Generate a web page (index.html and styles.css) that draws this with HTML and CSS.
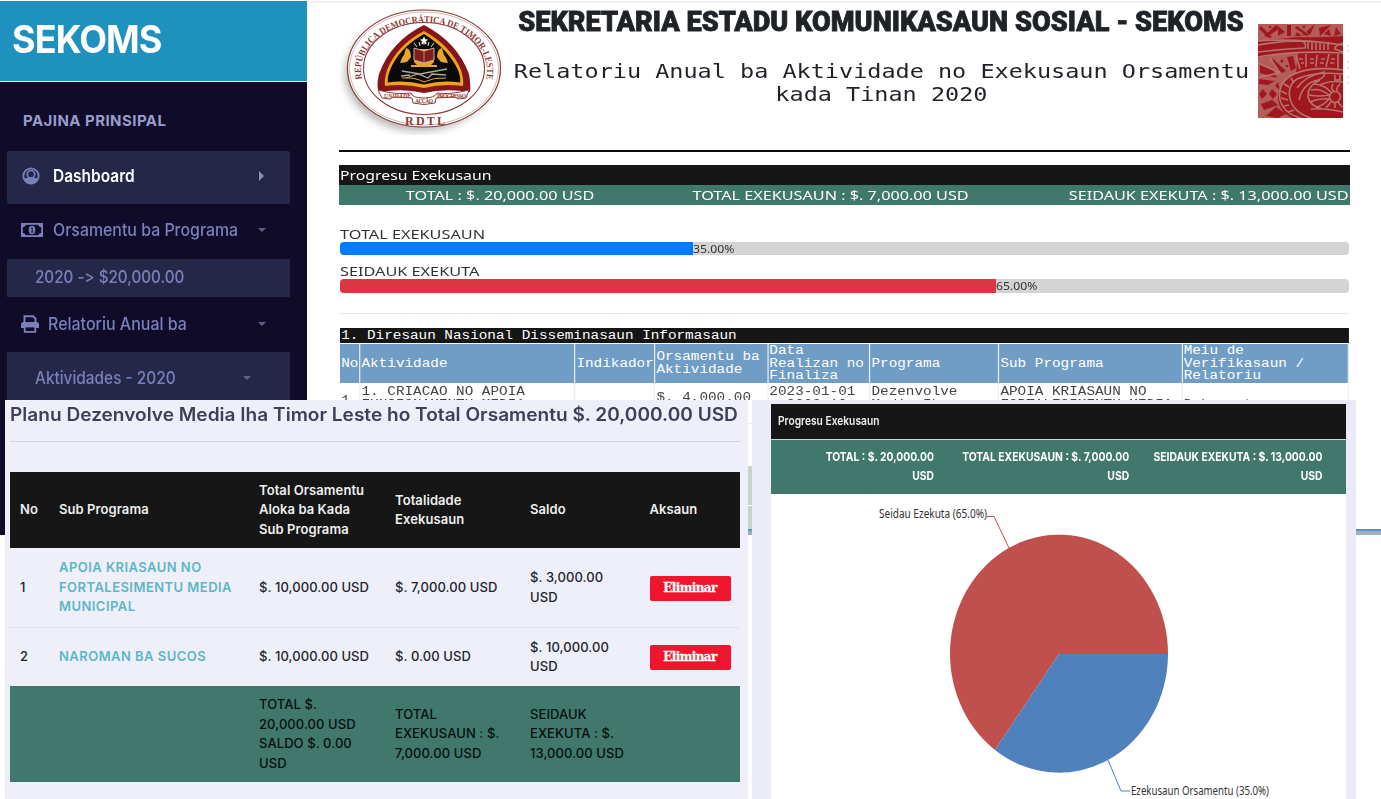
FILE: index.html
```html
<!DOCTYPE html>
<html lang="tet">
<head>
<meta charset="utf-8">
<title>SEKOMS</title>
<link rel="stylesheet" href="styles.css">
</head>
<body>
<div class="page">
  <aside class="sidebar">
    <div class="brand"><span>SEKOMS</span></div>
    <div class="section">PAJINA PRINSIPAL</div>
    <a class="item active">
      <svg class="ico" width="18" height="18" viewBox="0 0 18 18"><circle cx="9" cy="9" r="7.7" fill="none" stroke="#7b80bb" stroke-width="1.8"/><circle cx="9" cy="7.2" r="3.7" fill="none" stroke="#7b80bb" stroke-width="1.6"/><path d="M2 11.500Q5 11 6.500 10.600Q9 12.500 11.500 10.600Q13 11 16 11.500Q13.500 17 9 17T2 11.500Z" fill="#7b80bb"/></svg>
      <span class="t-dash">Dashboard</span>
      <svg class="caret" width="6" height="10" viewBox="0 0 6 10"><path d="M0 0L5 5L0 10Z" fill="#8c8fb4"/></svg>
    </a>
    <a class="item money">
      <svg class="ico" width="22" height="14" viewBox="0 0 22 14"><rect x="0.9" y="0.9" width="20.2" height="12.2" fill="none" stroke="#7b80bb" stroke-width="1.8"/><path d="M1 1H5Q4.5 4 1 4.500ZM21 1H17Q17.500 4 21 4.500ZM1 13H5Q4.500 10 1 9.500ZM21 13H17Q17.500 10 21 9.500Z" fill="#7b80bb"/><ellipse cx="11" cy="7" rx="3.300" ry="4.200" fill="#7b80bb"/><path d="M10 5.500L11.200 4.700V8.700M9.800 9H12.500" stroke="#0f0b29" fill="none"/></svg>
      <span class="t-orsa">Orsamentu ba Programa</span>
      <svg class="caret" width="8" height="4" viewBox="0 0 8 4"><path d="M0 0H8L4 4Z" fill="#5d6088"/></svg>
    </a>
    <a class="sub"><span class="t-2020">2020 -&gt; $20,000.00</span></a>
    <a class="item print">
      <svg class="ico" width="18" height="18" viewBox="0 0 18 18"><path d="M3.500 8V1.200H12L14.500 3.500V8" fill="none" stroke="#7b80bb" stroke-width="2"/><path d="M2.500 7H15.500Q18 7 18 9.500V13H15V11H3V13H0V9.500Q0 7 2.500 7Z" fill="#7b80bb"/><rect x="3.700" y="11.500" width="10.600" height="5.400" fill="none" stroke="#7b80bb" stroke-width="1.800"/></svg>
      <span class="t-rela">Relatoriu Anual ba</span>
      <svg class="caret" width="8" height="4" viewBox="0 0 8 4"><path d="M0 0H8L4 4Z" fill="#5d6088"/></svg>
    </a>
    <a class="sub last"><span class="t-akti">Aktividades - 2020</span>
      <svg class="caret" width="8" height="4" viewBox="0 0 8 4"><path d="M0 0H8L4 4Z" fill="#5d6088"/></svg></a>
  </aside>

  <main class="report">
    <header class="head">
      <svg class="seal" width="164" height="130" viewBox="0 0 164 130">
        <defs>
          <filter id="sh" x="-20%" y="-20%" width="140%" height="140%"><feGaussianBlur stdDeviation="4"/></filter>
          <path id="arcTop" d="M23 74A63 48 0 1 1 147 74"/>
        </defs>
        <ellipse cx="80" cy="69" rx="74" ry="57" fill="#8b8b8b" opacity=".65" filter="url(#sh)"/>
        <ellipse cx="85" cy="63.500" rx="76.500" ry="58.500" fill="#fff" stroke="#8d3a36" stroke-width="1.200"/>
        <ellipse cx="85" cy="63.500" rx="74.500" ry="56.500" fill="none" stroke="#b98280" stroke-width=".600"/>
        <ellipse cx="85" cy="63.500" rx="60.500" ry="46" fill="none" stroke="#8d3a36" stroke-width="1.100"/>
        <text class="seal-text"><textPath href="#arcTop" textLength="192" lengthAdjust="spacingAndGlyphs">REPÚBLICA DEMOCRÁTICA DE TIMOR-LESTE</textPath></text>
        <text class="seal-rdtl" x="66" y="119.500" textLength="40">RDTL</text>
        <path d="M85 20Q118 37 130 69Q132 81 131 87Q106 83 85 88Q64 83 40 87Q37 81 40 69Q52 36 85 20Z" fill="#86151b"/>
        <path d="M85 26Q112 41 122 65Q125 75 124 81Q104 78 85 83Q65 78 46 81Q45 75 48 65Q58 40 85 26Z" fill="#f1a21d"/>
        <path d="M85 29Q109 44 119 65Q122 73 121 77.500Q103 75 85 79.500Q66 75 49 77.500Q48 73 51 65Q60 43 85 29Z" fill="#0c0a08"/>
        <g transform="translate(1 0)">
        <path d="M84 31.500L85.300 34.300L88 34.500L86 36.500L86.700 39.500L84 38L81.300 39.500L82 36.500L80 34.500L82.700 34.300Z" fill="#fff"/>
        <path d="M77 42L74 38M80 41L79 37M84 40V37M88 41L89 37M91 42L94 38" stroke="#ddd" fill="none"/>
        <path d="M66 43Q71 44 71 52L67 57L60 58Q62 52 64 50ZM102 43Q97 44 97 52L101 57L108 58Q106 52 104 50Z" fill="#e9a62b"/>
        <path d="M74 44H94V57L91 60H97V62H71V60H77L74 57Z" fill="#e8a32a"/>
        <path d="M74 43L84 46L94 43V55L84 58L74 55Z" fill="#7f2018" stroke="#caa"/>
        <path d="M84 46V58" stroke="#d99" stroke-width=".8"/>
        <path d="M62 66L80 69L107 64M66 73L78 69L88 73L92 69L106 70M61 71L70 70" stroke="#a9a9a0" stroke-width="1.300" fill="none"/>
        <path d="M62 73Q75 72 84 77Q94 72 106 73" stroke="#e8a32a" fill="none"/>
        </g>
        <path d="M39 85Q57 90 72 88Q73 93 85 93Q96 93 98 88Q111 90 130 85L127 93L119 94L116 92L97 93L96 98Q85 101 74 98L73 93L54 92L51 94L43 93Z" fill="#fff" stroke="#8d3a36"/>
        <text class="motto" x="45" y="92.500" textLength="27">UNIDADE</text>
        <text class="motto" x="76" y="98" textLength="18">ACÇÃO</text>
        <text class="motto" x="98" y="92.500" textLength="29">PROGRESSO</text>
      </svg>
      <div class="titles">
        <h1>SEKRETARIA ESTADU KOMUNIKASAUN SOSIAL - SEKOMS</h1>
        <p>Relatoriu Anual ba Aktividade no Exekusaun Orsamentu<br>kada Tinan 2020</p>
      </div>
      <svg class="motif" width="94" height="96" viewBox="0 0 94 96">
        <rect x="1" y="1" width="85" height="94" fill="#9f1820"/>
        <svg x="1" y="1" width="85" height="94" viewBox="0 0 85 94">
        <g fill="#b9736c" opacity=".75">
          <path d="M0 0H85V12Q60 14 40 13L0 17ZM0 34Q14 30 40 29L38 50Q20 58 20 76Q22 88 34 94H0Z"/>
        </g>
        <g fill="#9f1820">
          <path d="M3 2L14 13L11 14L1 5ZM18 1L22 4L9 13L6 12ZM39 2L51 11L49 12L37 4ZM57 0L52 11L48 8ZM61 4L73 1L62 12ZM78 3L83 10L76 12ZM29 1H33V12H29ZM2 40L15 46L19 54L2 49ZM14 34L28 47L24 49L16 42ZM1 55L17 57L10 61L1 60ZM5 65L9 70L4 75L1 70ZM14 65L19 70L15 75L11 70ZM3 80L14 76L20 81L6 86ZM8 92L18 83L28 90L20 94ZM29 33L35 32L38 44L33 47ZM20 2L27 8L20 12ZM39 8L44 12H37ZM66 10L71 5L73 12ZM20 58L22 66L17 62Z"/>
        </g>
        <g fill="none" stroke="#b9736c" stroke-width="1.600">
          <path d="M0 17Q38 14 85 21M0 33Q38 26 85 29M0 21Q22 17 43 17Q49 18 47 24Q25 25 0 28M85 19Q75 23 77 25L85 28M50 18V25M54 18V26M58 19V26M62 19V26M66 20V26M70 20V26"/>
          <path d="M38 31L42 45M48 30V43M59 31L58 43M71 30L68 43M80 30V45M41 35H45M43 39H46M52 35H56M52 39H56M63 35H67M62 39H66M73 35H77M72 39H76M22 49L12 34M22 49L0 39M22 49L0 53"/>
          <path d="M85 46Q54 42 36 50Q19 58 22 76Q26 90 43 94M85 50Q56 47 39 55Q29 61 32 75Q36 89 53 94M26 60L31 63M23 67L29 70M23 74L30 76M26 82L31 81M30 88L36 86M33 54L36 59"/>
          <path d="M39 64Q47 52 66 48Q68 53 60 56Q45 59 41 76M53 85Q66 84 85 88M62 56Q49 62 50 73Q52 82 64 85M85 58Q72 56 62 61"/>
          <circle cx="77" cy="73" r="5.500"/><path d="M53 66Q62 64 71 71Q60 73 51 71M56 60Q67 61 73 68M52 78Q61 74 71 75Q65 82 58 83M68 84L73 78M77 84V79M84 83L80 78M75 60Q72 65 76 67M82 60Q78 64 79 67M77 51V56H82V51"/>
        </g>
        <g fill="#9f1820"><circle cx="12" cy="3" r="1.300"/><circle cx="46" cy="3" r="1.300"/><circle cx="46" cy="10" r="1.300"/><circle cx="24" cy="37" r="1.500"/><circle cx="29" cy="42" r="1.300"/></g>
        </svg>
        <path d="M90 23H92M90 28H92M90 39H92M90 45H92M90 54H92M90 60H92" stroke="#dcc4a4"/>
      </svg>
    </header>

    <section class="progress-head">
      <div class="ph-title"><span>Progresu Exekusaun</span></div>
      <div class="ph-row"><span>TOTAL : $. 20,000.00 USD</span><span>TOTAL EXEKUSAUN : $. 7,000.00 USD</span><span>SEIDAUK EXEKUTA : $. 13,000.00 USD</span></div>
    </section>

    <section class="bars">
      <div class="bar-label"><span>TOTAL EXEKUSAUN</span></div>
      <div class="bar"><div class="fill blue" style="width:35%"></div><span>35.00%</span></div>
      <div class="bar-label second"><span>SEIDAUK EXEKUTA</span></div>
      <div class="bar tall"><div class="fill red" style="width:65%"></div><span>65.00%</span></div>
    </section>

    <section class="plan">
      <div class="plan-title">1. Diresaun Nasional Disseminasaun Informasaun</div>
      <div class="plan-row plan-head"><div>No</div><div>Aktividade</div><div>Indikador</div><div>Orsamentu ba<br>Aktividade</div><div>Data<br>Realizan no<br>Finaliza</div><div>Programa</div><div>Sub Programa</div><div>Meiu de<br>Verifikasaun /<br>Relatoriu</div></div>
      <div class="plan-row plan-body"><div class="mid">1</div><div>1. CRIACAO NO APOIA<br>FUNSIONAMENTU MEDIA</div><div></div><div class="amount">$. 4,000.00</div><div>2023-01-01<br>- 2023-12</div><div>Dezenvolve<br>Media Iha</div><div>APOIA KRIASAUN NO<br>FORTALESIMENTU MEDIA</div><div><br>Dokumentu</div></div>
    </section>
    <div class="plan-rest">
      <div class="rest-row"></div>
      <div class="rest-total"></div>
      <div class="rest-total short"></div>
      <div class="rest-end"></div>
    </div>
  </main>

  <section class="budget">
    <h2><span>Planu Dezenvolve Media Iha Timor Leste ho Total Orsamentu $. 20,000.00 USD</span></h2>
    <div class="tr th"><span>No</span><span>Sub Programa</span><span>Total Orsamentu<br>Aloka ba Kada<br>Sub Programa</span><span>Totalidade<br>Exekusaun</span><span>Saldo</span><span>Aksaun</span></div>
    <div class="tr r1"><span>1</span><span class="link">APOIA KRIASAUN NO<br>FORTALESIMENTU MEDIA<br>MUNICIPAL</span><span>$. 10,000.00 USD</span><span>$. 7,000.00 USD</span><span>$. 3,000.00<br>USD</span><b class="btn">Eliminar</b></div>
    <div class="tr r2"><span>2</span><span class="link">NAROMAN BA SUCOS</span><span>$. 10,000.00 USD</span><span>$. 0.00 USD</span><span>$. 10,000.00<br>USD</span><b class="btn">Eliminar</b></div>
    <div class="tr tf"><span></span><span></span><span>TOTAL $.<br>20,000.00 USD<br>SALDO $. 0.00<br>USD</span><span>TOTAL<br>EXEKUSAUN : $.<br>7,000.00 USD</span><span>SEIDAUK<br>EXEKUTA : $.<br>13,000.00 USD</span><span></span></div>
  </section>

  <section class="chart">
    <div class="chart-card">
      <div class="chart-title"><span>Progresu Exekusaun</span></div>
      <div class="chart-totals"><span>TOTAL : $. 20,000.00<br>USD</span><span>TOTAL EXEKUSAUN : $. 7,000.00<br>USD</span><span>SEIDAUK EXEKUTA : $. 13,000.00<br>USD</span></div>
      <svg class="pie" width="575" height="305" viewBox="771 494 575 305">
        <path d="M1059 654L995 750A109 119 0 1 1 1168 654Z" fill="#c0504e"/>
        <path d="M1059 654H1168A109 119 0 0 1 995 750Z" fill="#4f81bc"/>
        <path d="M987 516.500H994L1009 548" fill="none" stroke="#c0504e"/>
        <path d="M1108 760L1121 791H1130" fill="none" stroke="#4f81bc"/>
        <text x="879" y="518" textLength="108" lengthAdjust="spacingAndGlyphs">Seidau Ezekuta (65.0%)</text>
        <text x="1131" y="794.500" textLength="138" lengthAdjust="spacingAndGlyphs">Ezekusaun Orsamentu (35.0%)</text>
      </svg>
    </div>
  </section>
</div>
</body>
</html>
```

FILE: styles.css
```css
* { box-sizing: border-box; }
body { margin: 0; background: #fff; font-family: Inter, "Liberation Sans", sans-serif; }
.page { position: relative; width: 1381px; height: 799px; overflow: hidden; display: flex; align-items: flex-start; padding-top: 1px; }
span { white-space: nowrap; }

.sidebar { width: 307px; height: 534px; background: #0f0b29; color: #7b80bb; flex: none; padding-bottom: 20px; }
.brand { height: 81px; background: #1e91bf; border-bottom: 1px solid #dfeaf2; color: #fff; font-weight: 700; font-size: 38px; line-height: 77px; padding-left: 12px; letter-spacing: -1px; }
.brand span, .t-dash, .t-orsa, .t-2020, .t-rela, .t-akti { display: inline-block; transform-origin: 0 50%; }
.brand span { transform: scaleX(.95); }
.t-orsa { transform: scaleX(.935); }
.t-2020 { transform: scaleX(.894); font-feature-settings: "calt" 0; }
.t-rela { transform: scaleX(.94); }
.t-akti { transform: scaleX(.905); }
.section { height: 69px; padding: 29px 0 0 23px; font-size: 15px; line-height: 20px; font-weight: 700; letter-spacing: .45px; color: #9a9dcb; }
.item { display: flex; align-items: center; width: 283px; margin-left: 7px; font-size: 17px; font-weight: 500; }
.item .ico { margin-left: 15px; flex: none; }
.active { height: 53px; background: #242748; color: #fff; border-radius: 2px; padding-bottom: 3px; font-weight: 600; }
.active .t-dash { margin-left: 13px; transform: scaleX(.91); }
.caret { margin-left: auto; margin-right: 25px; }
.money { height: 55px; padding-bottom: 3px; }
.money .ico { margin-left: 14px; }
.money .t-orsa { margin-left: 10px; }
.money .caret, .print .caret { margin-right: 24px; }
.sub { display: flex; align-items: center; width: 283px; height: 38px; margin-left: 7px; padding: 0 0 2px 28px; background: #242748; font-size: 17px; font-weight: 500; }
.print { height: 55px; padding-bottom: 2px; }
.print .ico { margin-left: 14px; }
.print .t-rela { margin-left: 9px; }
.last { height: 54px; padding-bottom: 2px; }
.last .caret { margin-right: 39px; }

.report { width: 1074px; height: 534px; padding: 0 31px 0 32px; border-top: 2px solid #f0f0f0; }
.head { height: 149px; border-bottom: 2px solid #0a0a0a; display: flex; align-items: flex-start; color: #1f2328; }
.seal { margin-top: 2px; flex: none; }
.titles { width: 749px; flex: none; display: flex; flex-direction: column; align-items: center; margin-left: 4px; }
.titles h1 { margin: 0; height: 35px; font-family: Roboto, sans-serif; font-weight: 900; font-size: 28px; line-height: 37px; white-space: nowrap; transform: scaleX(.97); -webkit-text-stroke: .8px #1f2328; }
.titles p { margin: 22px 0 0; font-family: "DejaVu Sans Mono", monospace; font-size: 19px; line-height: 23px; text-align: center; white-space: nowrap; transform: scaleX(1.236); }
.motif { margin: 20px 0 0 1px; flex: none; }

.progress-head, .bars { font-family: "Noto Sans", sans-serif; }
.progress-head { margin-top: 13px; width: 1011px; color: #fff; font-size: 13px; line-height: 20px; }
.progress-head span, .bar-label span { display: inline-block; transform-origin: 0 50%; transform: scaleX(1.215); }
.ph-title { height: 20px; background: #161616; padding-left: 1px; }
.ph-row { height: 20px; background: #40786c; display: grid; grid-template-columns: 255px 375px 380px; justify-items: end; }
.ph-row span { transform-origin: 100% 50%; transform: scaleX(1.246); }
.bars { margin-top: 19px; padding-left: 1px; width: 1010px; height: 90px; border-bottom: 1px solid #e6e6e6; color: #333; }
.bar-label { height: 18px; font-size: 13px; line-height: 20px; }
.bar-label span { transform: scaleX(1.25); }
.second { margin-top: 6px; }
.bar { display: flex; height: 13px; background: #d5d4d5; border-radius: 4px; overflow: hidden; font-size: 10px; line-height: 14px; }
.bar.tall { height: 14px; }
.bar span { transform: scaleX(1.22); transform-origin: 0 50%; }
.blue { background: #007bff; }
.red { background: #dc3545; }

.plan { margin: 14px 0 0 1px; width: 845.1px; transform: scaleX(1.194); transform-origin: 0 0; font-family: "Liberation Mono", monospace; font-size: 12px; line-height: 12.7px; white-space: nowrap; color: #444; }
.plan-title { height: 15px; background: #161616; color: #fff; padding-left: 1px; line-height: 16px; }
.plan-row { display: grid; grid-template-columns: 17px 180px 67px 94.600px 85.500px 108px 153.500px 139.500px; }
.plan-head { height: 40px; border-top: 1px solid #fff; background: #709dc5; color: #fff; align-items: stretch; }
.plan-head div { border-right: 1.200px solid #e8f0f8; display: flex; align-items: center; padding: 1px 0 0 1px; }
.plan-body { height: 17px; overflow: hidden; }
.plan-body div { padding: 3px 0 0 1px; border-right: 1px solid #eee; height: 40px; }
.plan-body .amount { padding-top: 9px; }
.plan-body .mid { padding-top: 12px; }
.plan-rest { margin-top: 23px; }
.rest-row { height: 43px; border-top: 1px solid #eee; }
.rest-total { height: 40px; background: #c9d3cb; border-bottom: 1px solid #fff; }
.rest-total.short { height: 23px; border: 0; }
.rest-end { height: 6px; margin-right: -31px; background: #9cafc4; border-top: 2px solid #648fb8; }

.budget { position: absolute; left: 5px; top: 400px; width: 743px; height: 399px; background: #eeeff8; padding: 0 8px 0 5px; color: #24242e; }
.budget h2 { margin: 0 0 30px; height: 42px; border-bottom: 1px solid #d2d3dd; font-size: 18px; line-height: 29px; font-weight: 600; color: #3f4057; }
.budget h2 span { display: inline-block; transform-origin: 0 50%; transform: scaleX(1.06); }
.tr { display: grid; grid-template-columns: 39px 200px 136px 135px 119.500px 100px; width: 730px; padding-left: 10px; align-items: center; font-size: 13px; line-height: 19.500px; font-weight: 500; letter-spacing: .08px; }
.th { height: 76px; background: #161616; color: #eee; font-weight: 600; }
.r1 { height: 80px; border-bottom: 1px solid #e1e2ea; }
.r2 { height: 58px; }
.tf { height: 96px; background: #40786c; color: #07100e; }
.link { color: #5cb6c6; font-weight: 600; letter-spacing: .46px; }
.btn { display: block; width: 81px; height: 25px; margin-top: 1px; background: #f0142c; color: #fff; border-radius: 2px; text-align: center; font-family: "DejaVu Serif", serif; font-size: 12px; line-height: 24px; letter-spacing: -.6px; -webkit-text-stroke: .3px #fff; }

.chart { position: absolute; left: 752px; top: 400px; width: 604px; height: 399px; background: #ebebf5; padding: 4px 10px 0 19px; }
.chart-card { width: 575px; height: 395px; background: #fff; }
.chart-title { height: 36px; background: #161616; border-bottom: 1px solid #cfd8d6; color: #eee; font-size: 12px; line-height: 34px; font-weight: 600; padding-left: 7px; }
.chart-title span { display: inline-block; transform: scaleX(.853); transform-origin: 0 50%; }
.chart-totals { height: 54px; background: #40786c; color: #fff; display: grid; grid-template-columns: 163px 195px 194px; justify-items: end; padding-top: 8px; font-size: 12px; line-height: 18.500px; font-weight: 700; }
.chart-totals span { text-align: right; transform: scaleX(.86); transform-origin: 100% 50%; }
.pie { display: block; font-family: "Noto Sans", sans-serif; font-size: 12px; fill: #333; }
.seal-text { font: bold 9.5px "Liberation Serif", serif; fill: #8d3a36; }
.seal-rdtl { font: bold 12px "Liberation Serif", serif; fill: #8d3a36; }
.motto { font: bold 5.5px "Liberation Serif", serif; fill: #8d3a36; }
```
